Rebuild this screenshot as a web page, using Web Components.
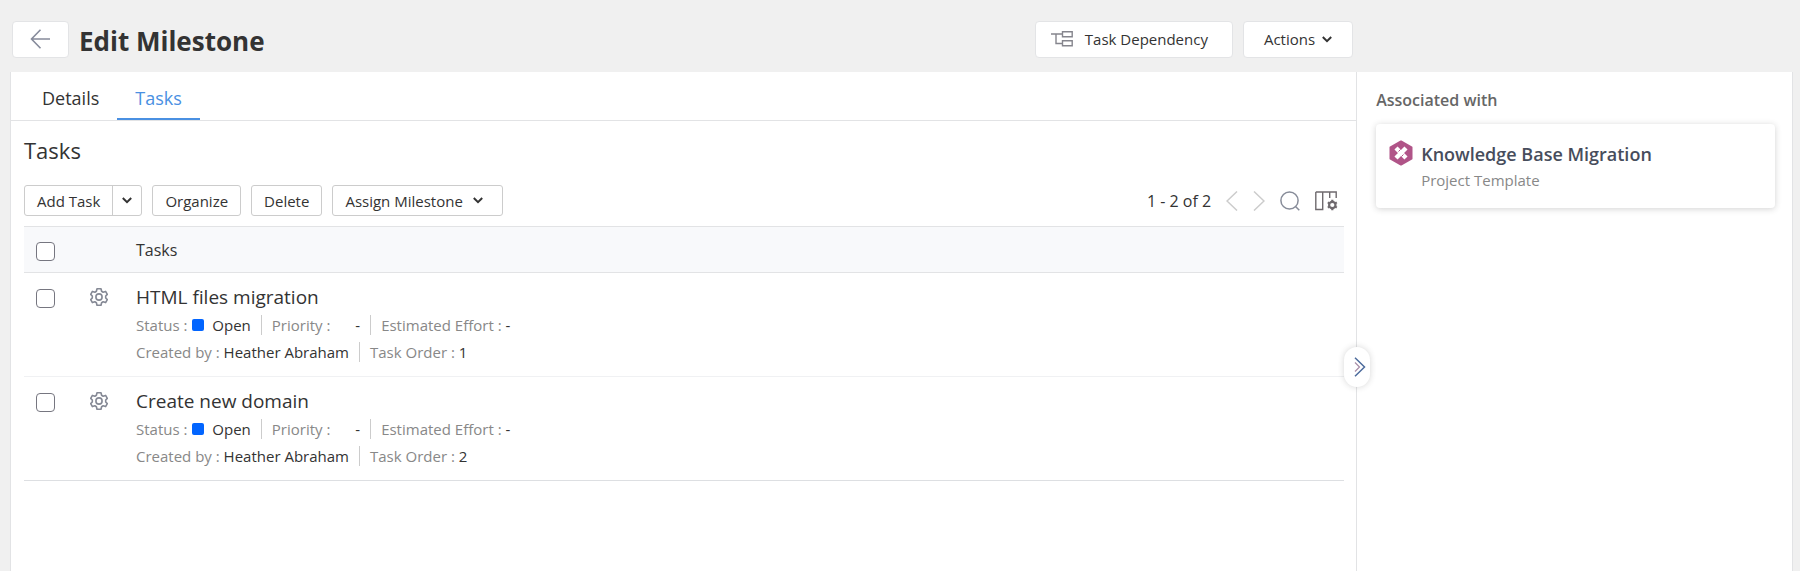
<!DOCTYPE html>
<html lang="en">
<head>
<meta charset="utf-8">
<meta name="viewport" content="width=device-width, initial-scale=1">
<title>Edit Milestone</title>
<style>
    body {
        margin: 0;
        background-color: #f0f0f0;
        color: #333;
        font-family: "Open Sans", "Noto Sans", sans-serif;
        font-size: 15px;
    }
</style>
</head>
<body>
<milestone-page>
    <page-header slot="header" heading="Edit Milestone">
        <app-button class="large wide" icon="dependency">Task Dependency</app-button>
        <app-button class="large" caret>Actions</app-button>
    </page-header>
    <tab-bar tabs="Details,Tasks" active="Tasks"></tab-bar>
    <task-list heading="Tasks">
        <split-button slot="tools">Add Task</split-button>
        <app-button slot="tools">Organize</app-button>
        <app-button slot="tools">Delete</app-button>
        <app-button slot="tools" class="menu" caret>Assign Milestone</app-button>
        <list-pager slot="pager">1 - 2 of 2</list-pager>
    </task-list>
    <associated-panel slot="side" heading="Associated with">
        <project-card kind="Project Template">Knowledge Base Migration</project-card>
    </associated-panel>
</milestone-page>

<script>
const icons = {
    back: `<svg width="20" height="20" viewBox="0 0 20 20" fill="none" stroke="#868b9b" stroke-width="1.6"><path d="M20 10H1.5M10.5 .8L1.5 10l9 9.2"/></svg>`,
    dependency: `<svg width="22" height="16" viewBox="0 0 22 16" fill="none" stroke="#85858d" stroke-width="1.4"><path d="M0 3h11M5 3v9.500h6M11.500 .8h9.700v5h-9.700zM11.500 9.800h9.700v5h-9.700z"/></svg>`,
    caret: `<svg width="10" height="7" viewBox="0 0 10 7" fill="none" stroke="#333" stroke-width="2"><path d="M.8 1L5 5.200 9.200 1"/></svg>`,
    prev: `<svg width="12" height="20" viewBox="0 0 12 20" fill="none" stroke="#ccc" stroke-width="1.5"><path d="M11 .5L1 10l10 9.500"/></svg>`,
    next: `<svg width="12" height="20" viewBox="0 0 12 20" fill="none" stroke="#ccc" stroke-width="1.5"><path d="M1 .5L11 10 1 19.500"/></svg>`,
    search: `<svg width="20" height="20" viewBox="0 0 20 20" fill="none" stroke="#878c99" stroke-width="1.5"><circle cx="9.500" cy="9.500" r="8.600"/><path d="M15.500 15.500l3.800 3.800"/></svg>`,
    columns: `<svg width="23" height="20" viewBox="0 0 23 20" fill="none" stroke="#6f6a6e" stroke-width="1.400"><path d="M.8 1h20.400v6M.8 1v17.500H7.700V1M14.700 1v6"/><circle cx="17.300" cy="14" r="3.200" stroke-width="2.200"/><path stroke-width="2.200" d="M17.300 8.800v2M17.300 17.200v2M12.800 11.400l1.700 1M20.100 15.600l1.700 1M12.800 16.600l1.700-1M20.100 12.400l1.700-1"/></svg>`,
    gear: `<svg width="18" height="18" viewBox="0 0 18 18" fill="none" stroke="#858995" stroke-width="1.600" stroke-linejoin="round"><circle cx="9" cy="9" r="3.100"/><path d="M7 .8h4l.6 2.500 1.500.9 2.500-.8 1.700 3-1.600 1.600v2l1.600 1.600-1.700 3-2.500-.8-1.500.9-.6 2.500H7l-.6-2.500-1.500-.9-2.500.8-1.700-3L2.300 10V8L.7 6.400l1.700-3 2.500.8 1.500-.9z"/></svg>`,
    collapse: `<svg width="12" height="20" viewBox="0 0 12 20" fill="none"><path stroke="#4d6c9d" stroke-width="1.500" d="M1 .8L10.500 10 1 19.200"/><path stroke="#a88ca6" stroke-width="1.200" d="M1 5.500L5.500 10 1 14.500"/></svg>`,
    project: `<svg width="24" height="26" viewBox="0 0 24 26"><path fill="#b05488" stroke="#b05488" stroke-width="2" stroke-linejoin="round" d="M12 1.500l10.500 5.800v11.400L12 24.500 1.500 18.700V7.300z"/><path stroke="#fff" stroke-width="4.400" d="M7 8l10 10M17 8L7 18"/><path stroke="#b05488" stroke-width="1" d="M9.500 11.500l2-2M12.500 16.500l2-2"/></svg>`
};

class MilestonePage extends HTMLElement {
    constructor() {
        super();
        this.attachShadow({ mode: "open" });
    }

    connectedCallback() {
        this.shadowRoot.innerHTML = `
            <style>
                :host {
                    display: grid;
                    grid-template-columns: minmax(0, 34fr) minmax(0, 11fr);
                    grid-template-rows: 72px 1fr;
                    min-height: 100vh;
                    padding: 0 7px 0 10px;
                    box-sizing: border-box;
                }

                main, aside {
                    background-color: white;
                    border-right: 1px solid #e2e3e5;
                }

                main {
                    border-left: 1px solid #e2e3e5;
                    position: relative;
                }

                /* handle sits over the line between both panels */
                button {
                    position: absolute;
                    right: -14px;
                    top: 275px;
                    width: 26px;
                    height: 40px;
                    padding: 0 0 0 5px;
                    display: grid;
                    place-items: center;
                    background-color: white;
                    border: none;
                    border-radius: 13px;
                    box-shadow: 0 0 6px rgba(51, 51, 51, 0.2);
                }
            </style>
            <slot name="header"></slot>
            <span></span>
            <main>
                <slot></slot>
                <button type="button" aria-label="Collapse panel">${icons.collapse}</button>
            </main>
            <aside><slot name="side"></slot></aside>
        `;
    }
}

class PageHeader extends HTMLElement {
    constructor() {
        super();
        this.attachShadow({ mode: "open" });
    }

    connectedCallback() {
        this.shadowRoot.innerHTML = `
            <style>
                :host {
                    display: flex;
                    align-items: center;
                    gap: 10px;
                    padding: 6px 4px 0 2px;
                }

                button {
                    width: 57px;
                    height: 37px;
                    padding: 0 2px 0 0;
                    display: grid;
                    place-items: center;
                    background-color: white;
                    border: 1px solid #e3e4e6;
                    border-radius: 4px;
                }

                h1 {
                    flex: 1;
                    margin: 0;
                    padding-top: 3px;
                    font-size: 26px;
                    line-height: 34px;
                    font-weight: 700;
                }
            </style>
            <button type="button" aria-label="Back">${icons.back}</button>
            <h1>${this.getAttribute("heading")}</h1>
            <slot></slot>
        `;
    }
}

class AppButton extends HTMLElement {
    constructor() {
        super();
        this.attachShadow({ mode: "open" });
    }

    connectedCallback() {
        const icon = this.getAttribute("icon");
        this.shadowRoot.innerHTML = `
            <style>
                :host {
                    display: block;
                }

                button {
                    display: flex;
                    align-items: center;
                    gap: 10px;
                    height: 31px;
                    padding: 0 12px;
                    background-color: white;
                    border: 1px solid #ccc;
                    border-radius: 3px;
                    color: inherit;
                    font: inherit;
                    white-space: nowrap;
                }

                :host(.menu) button {
                    padding-right: 19px;
                }

                :host(.large) button {
                    height: 37px;
                    gap: 7px;
                    padding: 0 20px;
                    border-color: #e3e4e6;
                    border-radius: 4px;
                }

                :host(.wide) button {
                    gap: 12px;
                    padding: 0 24px 0 15px;
                }
            </style>
            <button type="button">
                ${icon ? icons[icon] : ""}
                <slot></slot>
                ${this.hasAttribute("caret") ? icons.caret : ""}
            </button>
        `;
    }
}

class SplitButton extends HTMLElement {
    constructor() {
        super();
        this.attachShadow({ mode: "open" });
    }

    connectedCallback() {
        this.shadowRoot.innerHTML = `
            <style>
                :host {
                    display: flex;
                    border: 1px solid #ccc;
                    border-radius: 3px;
                }

                button {
                    height: 29px;
                    padding: 0 12px;
                    background: none;
                    border: none;
                    color: inherit;
                    font: inherit;
                }

                button + button {
                    padding: 0 9px;
                    border-left: 1px solid #ccc;
                    display: grid;
                    place-items: center;
                }
            </style>
            <button type="button"><slot></slot></button>
            <button type="button" aria-label="More">${icons.caret}</button>
        `;
    }
}

class TabBar extends HTMLElement {
    constructor() {
        super();
        this.attachShadow({ mode: "open" });
    }

    connectedCallback() {
        const active = this.getAttribute("active");
        const tabs = this.getAttribute("tabs").split(",");
        this.shadowRoot.innerHTML = `
            <style>
                :host {
                    display: flex;
                    height: 48px;
                    padding-left: 13px;
                    border-bottom: 1px solid #e2e3e5;
                }

                a {
                    padding: 0 18px;
                    border-bottom: 2px solid transparent;
                    color: inherit;
                    font-size: 18px;
                    line-height: 52px;
                    height: 46px;
                    text-decoration: none;
                }

                a.active {
                    color: #4a90e2;
                    border-color: #4a90e2;
                }
            </style>
            ${tabs.map(tab => `<a href="#" class="${tab === active ? "active" : ""}">${tab}</a>`).join("")}
        `;
    }
}

class ListPager extends HTMLElement {
    constructor() {
        super();
        this.attachShadow({ mode: "open" });
    }

    connectedCallback() {
        this.shadowRoot.innerHTML = `
            <style>
                :host {
                    display: flex;
                    align-items: center;
                    gap: 15px;
                    font-size: 16px;
                    padding-right: 6px;
                }

                button {
                    padding: 0;
                    display: grid;
                    background: none;
                    border: none;
                }
            </style>
            <slot></slot>
            <button type="button" aria-label="Previous">${icons.prev}</button>
            <button type="button" aria-label="Next">${icons.next}</button>
            <button type="button" aria-label="Search">${icons.search}</button>
            <button type="button" aria-label="Columns">${icons.columns}</button>
        `;
    }
}

class TaskItem extends HTMLElement {
    constructor() {
        super();
        this.attachShadow({ mode: "open" });
    }

    connectedCallback() {
        this.shadowRoot.innerHTML = `
            <style>
                :host {
                    display: block;
                }

                h3 {
                    margin: 0;
                    font-size: 19px;
                    line-height: 28px;
                    font-weight: 400;
                }

                div {
                    display: flex;
                    align-items: center;
                    height: 27px;
                    color: #888;
                }

                p {
                    margin: 0;
                    display: flex;
                    align-items: center;
                    line-height: 20px;
                    white-space: pre;
                }

                p + p {
                    margin-left: 10px;
                    padding-left: 10px;
                    border-left: 1px solid #ccc;
                }

                b {
                    color: #333;
                    font-weight: 400;
                }

                i {
                    width: 12px;
                    height: 12px;
                    margin: 0 8px 0 1px;
                    border-radius: 2px;
                    background-color: #0265ff;
                }

                .blank {
                    background: none;
                }
            </style>
            <h3><slot></slot></h3>
            <div>
                <p>Status : <i></i><b>Open</b></p>
                <p>Priority : <i class="blank"></i><b>-</b></p>
                <p>Estimated Effort : <b>-</b></p>
            </div>
            <div>
                <p>Created by : <b>${this.getAttribute("author")}</b></p>
                <p>Task Order : <b>${this.getAttribute("order")}</b></p>
            </div>
        `;
    }
}

class TaskList extends HTMLElement {
    constructor() {
        super();
        this.attachShadow({ mode: "open" });
        this.tasks = [
            { name: "HTML files migration", author: "Heather Abraham", order: 1 },
            { name: "Create new domain", author: "Heather Abraham", order: 2 }
        ];
    }

    connectedCallback() {
        this.shadowRoot.innerHTML = `
            <style>
                :host {
                    display: block;
                    padding: 12px 12px 0 13px;
                }

                h2 {
                    margin: 0 0 18px;
                    font-size: 22px;
                    line-height: 34px;
                    font-weight: 400;
                }

                .bar {
                    display: flex;
                    align-items: center;
                    gap: 10px;
                    margin-bottom: 10px;
                }

                slot[name="pager"] {
                    display: block;
                    margin-left: auto;
                }

                table {
                    width: 100%;
                    border-collapse: collapse;
                    border-top: 1px solid #e2e3e5;
                }

                th, td {
                    padding: 0;
                    text-align: left;
                    vertical-align: top;
                    font-weight: 400;
                }

                th {
                    height: 45px;
                    font-size: 16px;
                    vertical-align: middle;
                    background-color: #f8f9fb;
                    border-bottom: 1px solid #e2e3e5;
                }

                td {
                    padding: 10px 0 11px;
                    border-bottom: 1px solid #f0f1f3;
                }

                tr:last-child td {
                    border-color: #dddfe2;
                }

                .check {
                    width: 66px;
                }

                .gear {
                    width: 46px;
                }

                input {
                    appearance: none;
                    display: block;
                    width: 19px;
                    height: 19px;
                    margin: 6px 0 0 12px;
                    background-color: white;
                    border: 1px solid #767680;
                    border-radius: 4px;
                }

                th input {
                    margin-top: 3px;
                }

                button {
                    display: block;
                    padding: 5px 0;
                    background: none;
                    border: none;
                }
            </style>
            <h2>${this.getAttribute("heading")}</h2>
            <div class="bar">
                <slot name="tools"></slot>
                <slot name="pager"></slot>
            </div>
            <table>
                <thead>
                    <tr>
                        <th class="check"><input type="checkbox" aria-label="Select all"></th>
                        <th class="gear"></th>
                        <th>Tasks</th>
                    </tr>
                </thead>
                <tbody>
                    ${this.tasks.map(task => `
                        <tr>
                            <td class="check"><input type="checkbox" aria-label="Select ${task.name}"></td>
                            <td class="gear"><button type="button" aria-label="Task actions">${icons.gear}</button></td>
                            <td><task-item author="${task.author}" order="${task.order}">${task.name}</task-item></td>
                        </tr>
                    `).join("")}
                </tbody>
            </table>
        `;
    }
}

class AssociatedPanel extends HTMLElement {
    constructor() {
        super();
        this.attachShadow({ mode: "open" });
    }

    connectedCallback() {
        this.shadowRoot.innerHTML = `
            <style>
                :host {
                    display: block;
                    padding: 16px 17px 0 19px;
                }

                h2 {
                    margin: 0 0 12px;
                    color: #666;
                    font-size: 16px;
                    line-height: 24px;
                    font-weight: 600;
                }
            </style>
            <h2>${this.getAttribute("heading")}</h2>
            <slot></slot>
        `;
    }
}

class ProjectCard extends HTMLElement {
    constructor() {
        super();
        this.attachShadow({ mode: "open" });
    }

    connectedCallback() {
        this.shadowRoot.innerHTML = `
            <style>
                :host {
                    display: flex;
                    gap: 8px;
                    padding: 16px 13px;
                    border-radius: 4px;
                    box-shadow: 0 1px 6px rgba(51, 51, 51, 0.22);
                }

                a {
                    color: #474d5c;
                    font-size: 18px;
                    line-height: 28px;
                    font-weight: 600;
                    text-decoration: none;
                }

                p {
                    margin: 0;
                    color: #888;
                    line-height: 24px;
                }
            </style>
            ${icons.project}
            <div>
                <a href="#"><slot></slot></a>
                <p>${this.getAttribute("kind")}</p>
            </div>
        `;
    }
}

customElements.define("milestone-page", MilestonePage);
customElements.define("page-header", PageHeader);
customElements.define("app-button", AppButton);
customElements.define("split-button", SplitButton);
customElements.define("tab-bar", TabBar);
customElements.define("list-pager", ListPager);
customElements.define("task-item", TaskItem);
customElements.define("task-list", TaskList);
customElements.define("associated-panel", AssociatedPanel);
customElements.define("project-card", ProjectCard);
</script>
</body>
</html>
